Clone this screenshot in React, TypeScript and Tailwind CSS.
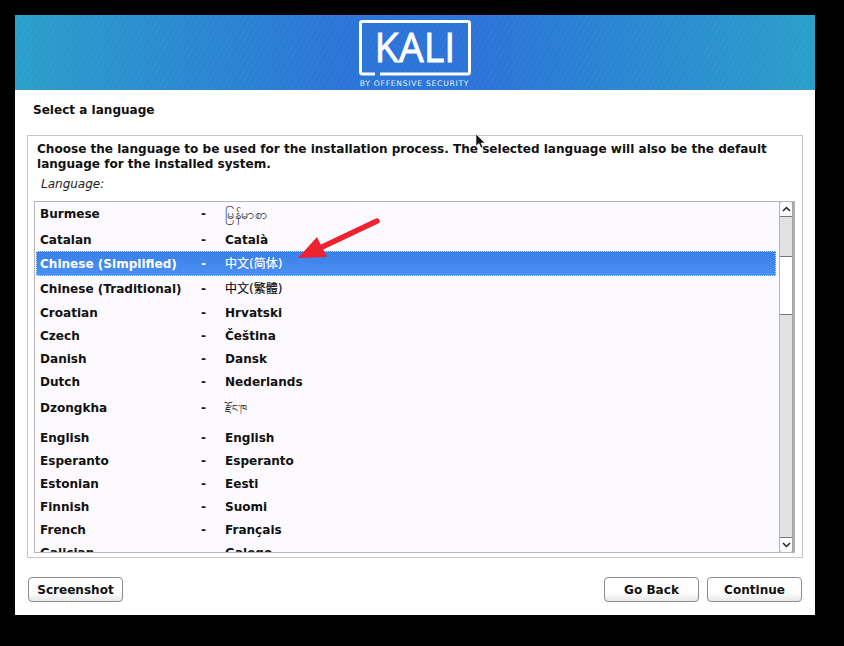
const fontStack = "font-['DejaVu_Sans','Noto_Sans_CJK_SC',sans-serif]";

type Lang = { name: string; native: string; h: string; nativeClass?: string; selected?: boolean };

const cjk = 'font-normal text-[12px] [-webkit-text-stroke:0.2px_currentColor]';

const languages: Lang[] = [
  { name: 'Burmese', native: 'မြန်မာစာ', h: 'h-[25px] pb-[3px]', nativeClass: 'font-normal text-[12.5px]' },
  { name: 'Catalan', native: 'Català', h: 'h-[24px]' },
  { name: 'Chinese (Simplified)', native: '中文(简体)', h: 'h-[25px]', nativeClass: cjk, selected: true },
  { name: 'Chinese (Traditional)', native: '中文(繁體)', h: 'h-[25px]', nativeClass: cjk },
  { name: 'Croatian', native: 'Hrvatski', h: 'h-[23px]' },
  { name: 'Czech', native: 'Čeština', h: 'h-[23px]' },
  { name: 'Danish', native: 'Dansk', h: 'h-[23px]' },
  { name: 'Dutch', native: 'Nederlands', h: 'h-[23px]' },
  { name: 'Dzongkha', native: 'རྫོང་ཁ', h: 'h-[33px] pb-[5px]', nativeClass: 'font-normal text-[10px]' },
  { name: 'English', native: 'English', h: 'h-[23px]' },
  { name: 'Esperanto', native: 'Esperanto', h: 'h-[23px]' },
  { name: 'Estonian', native: 'Eesti', h: 'h-[23px]' },
  { name: 'Finnish', native: 'Suomi', h: 'h-[23px]' },
  { name: 'French', native: 'Français', h: 'h-[23px]' },
  { name: 'Galician', native: 'Galego', h: 'h-[23px]' },
];

function LangRow({ lang }: { lang: Lang }) {
  const color = lang.selected
    ? 'bg-gradient-to-b from-[#3a7fe6] to-[#4a90f4] text-white outline-1 outline-dotted outline-offset-[-1px] outline-[#cfe0fb]'
    : 'text-[#111]';
  return (
    <div className={`flex shrink-0 items-center pl-[4px] pt-[2px] ${lang.h} ${color}`}>
      <span className="w-[161px] font-bold">{lang.name}</span>
      <span className="w-[24px] font-bold">-</span>
      <span className={lang.nativeClass ?? 'font-bold'}>{lang.native}</span>
    </div>
  );
}

function Logo() {
  return (
    <svg width="112" height="75" viewBox="0 0 112 75" className="block">
      <path
        d="M16 59 H3.5 Q1.5 59 1.5 57 V8 Q1.5 6.5 3.5 6.5 H108.5 Q110.5 6.5 110.5 8 V57 Q110.5 59 108.5 59 H21"
        fill="none"
        stroke="white"
        strokeWidth="3"
      />
      <text x="56" y="47" textAnchor="middle" fill="white" stroke="white" strokeWidth="0.8" fontFamily="Open Sans" fontSize="39.5">
        KALI
      </text>
      <text x="55.5" y="70.5" textAnchor="middle" fill="#e8f0fb" fontFamily="DejaVu Sans" fontSize="7.6" letterSpacing="0.75">
        BY OFFENSIVE SECURITY
      </text>
    </svg>
  );
}

function Button({ label }: { label: string }) {
  return (
    <button className="h-[25px] w-[95px] rounded-[4px] border border-[#8c8c8c] bg-gradient-to-b from-white from-60% to-[#e8e8e8] pt-[2px] text-[12.05px] font-bold text-[#111]">
      {label}
    </button>
  );
}

function ScrollBar() {
  return (
    <div className="flex h-full w-[15px] shrink-0 flex-col border-l border-l-[#b5b5b5] border-r-2 border-r-[#a8a8a8] bg-[#e2e2e2]">
      <div className="flex h-[15px] shrink-0 items-center justify-center rounded-t-[4px] border-b border-[#777] bg-white">
        <svg width="9" height="6" viewBox="0 0 9 6">
          <path d="M1 5 L4.5 1.5 L8 5" fill="none" stroke="#222" strokeWidth="1.5" />
        </svg>
      </div>
      <div className="mt-[39px] h-[59px] shrink-0 border-y border-[#777] bg-white" />
      <div className="flex-1" />
      <div className="flex h-[15px] shrink-0 items-center justify-center rounded-b-[4px] border-t border-[#777] bg-white">
        <svg width="9" height="6" viewBox="0 0 9 6">
          <path d="M1 1 L4.5 4.5 L8 1" fill="none" stroke="#222" strokeWidth="1.5" />
        </svg>
      </div>
    </div>
  );
}

export default function App() {
  return (
    <div className={`relative h-[646px] w-[844px] overflow-hidden bg-black pl-[15px] pt-[15px] text-[12.05px] leading-[15px] ${fontStack}`}>
      <div className="flex h-[600px] w-[800px] flex-col bg-white">
        <div className="flex h-[75px] shrink-0 justify-center bg-[repeating-linear-gradient(120deg,rgba(255,255,255,0.025)_0px,rgba(255,255,255,0.025)_2px,transparent_2px,transparent_5px),linear-gradient(90deg,#2a9fca_0%,#2b74d8_42%,#2b74d8_58%,#2a9fca_100%)]">
          <Logo />
        </div>

        <div className="flex h-[45px] shrink-0 items-center pb-[4px] pl-[18px] font-bold text-[#111]">Select a language</div>

        <div className="mx-[12px] flex h-[423px] shrink-0 flex-col border border-[#c4c4c4] pl-[6px] pr-[7px] pb-[4px]">
          <p className="pl-[3px] pt-[6px] font-bold text-[#111]">
            Choose the language to be used for the installation process. The selected language will also be the default language for the installed system.
          </p>
          <p className="pl-[7px] pt-[5px] text-[12px] italic text-[#222]">Language:</p>
          <div className="mt-[9px] flex min-h-0 flex-1 border border-[#b5b5b5] bg-[#fdfaff]">
            <div className="flex min-w-0 flex-1 flex-col overflow-hidden pl-px pr-[3px]">
              {languages.map(lang => (
                <LangRow key={lang.name} lang={lang} />
              ))}
            </div>
            <ScrollBar />
          </div>
        </div>

        <div className="flex flex-1 items-start justify-between pl-[13px] pr-[13px] pt-[19px]">
          <Button label="Screenshot" />
          <div className="flex gap-[8px]">
            <Button label="Go Back" />
            <Button label="Continue" />
          </div>
        </div>
      </div>

      {/* red annotation arrow */}
      <svg className="absolute left-[290px] top-[210px]" width="100" height="60" viewBox="0 0 100 60">
        <path d="M87 11 L30 38" stroke="#ee2230" strokeWidth="5.5" strokeLinecap="round" fill="none" />
        <path d="M8 48 L27 27 L37 47 Z" fill="#ee2230" />
      </svg>

      {/* mouse cursor */}
      <svg className="absolute left-[475px] top-[133px]" width="11" height="17" viewBox="0 0 11 17">
        <path d="M1 1 V13 L4 10.5 L6 15 L8 14 L6 10 H10 Z" fill="#111" stroke="#fff" strokeWidth="0.6" />
      </svg>
    </div>
  );
}
